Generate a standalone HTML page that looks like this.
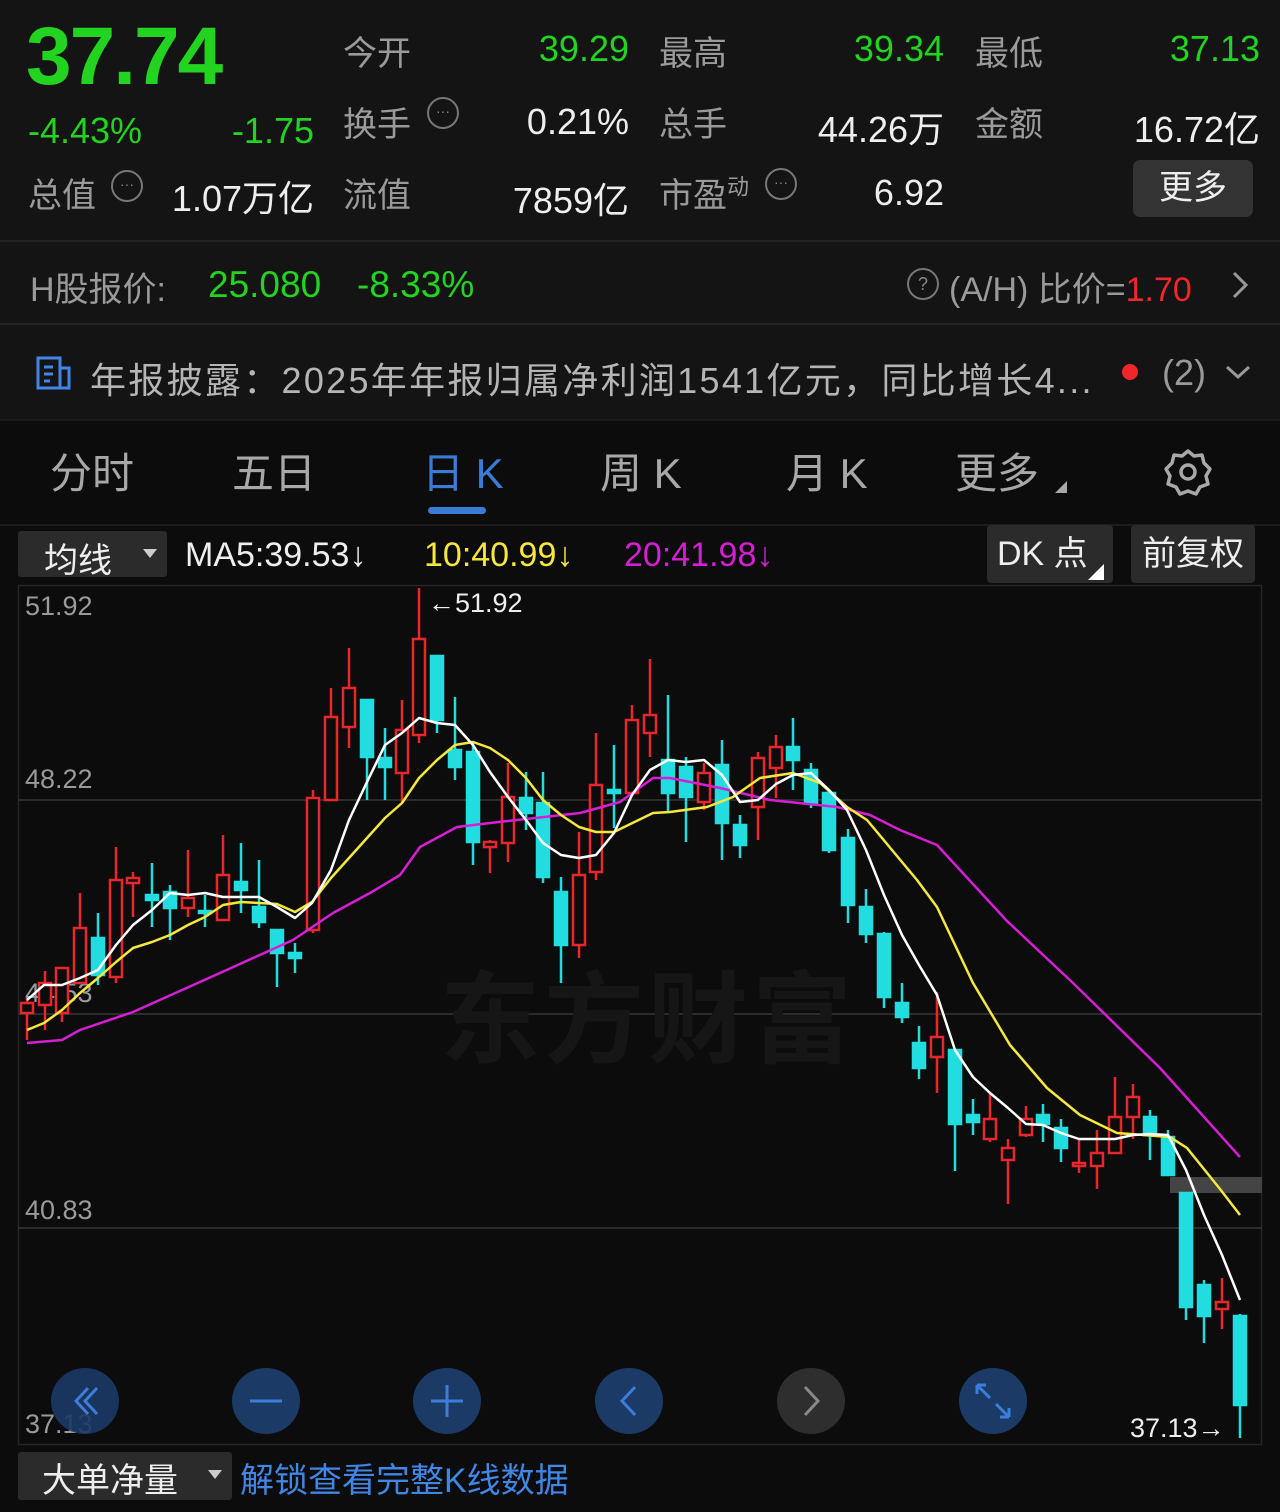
<!DOCTYPE html>
<html><head><meta charset="utf-8">
<style>
*{margin:0;padding:0;box-sizing:border-box}
body{width:1280px;height:1512px;background:#0c0c0c;font-family:"Liberation Sans","Noto Sans CJK SC",sans-serif;overflow:hidden;position:relative;color:#ddd}
.a{position:absolute;white-space:nowrap}
.g{color:#22d31f}.w{color:#eee}.l{color:#9a9a9a}
.top{position:absolute;left:0;top:0;width:1280px;height:420px;background:#141414}
.sep{position:absolute;left:0;width:1280px;height:2px;background:#222}
.dots{display:inline-block;width:32px;height:32px;border:2px solid #777;border-radius:50%;position:absolute;text-align:center;font-size:14px;line-height:24px;color:#888}
</style></head><body>
<div class="top"></div>
<div class="a g" style="left:26px;top:10px;font-size:82px;font-weight:bold;letter-spacing:-2px">37.74</div>
<div class="a g" style="left:28px;top:110px;font-size:36px">-4.43%</div>
<div class="a g" style="right:966px;top:110px;font-size:36px">-1.75</div>
<div class="a l" style="left:28px;top:168px;font-size:34px">总值</div><span class="dots" style="left:111px;top:170px">···</span>
<div class="a w" style="right:966px;top:170px;font-size:36px">1.07万亿</div>

<div class="a l" style="left:343px;top:26px;font-size:34px">今开</div>
<div class="a g" style="right:651px;top:28px;font-size:36px">39.29</div>
<div class="a l" style="left:343px;top:97px;font-size:34px">换手</div><span class="dots" style="left:427px;top:97px">···</span>
<div class="a w" style="right:651px;top:101px;font-size:36px">0.21%</div>
<div class="a l" style="left:343px;top:168px;font-size:34px">流值</div>
<div class="a w" style="right:651px;top:172px;font-size:36px">7859亿</div>

<div class="a l" style="left:659px;top:26px;font-size:34px">最高</div>
<div class="a g" style="right:336px;top:28px;font-size:36px">39.34</div>
<div class="a l" style="left:659px;top:97px;font-size:34px">总手</div>
<div class="a w" style="right:336px;top:101px;font-size:36px">44.26万</div>
<div class="a l" style="left:659px;top:168px;font-size:34px">市盈<sup style="font-size:22px">动</sup></div><span class="dots" style="left:765px;top:168px">···</span>
<div class="a w" style="right:336px;top:172px;font-size:36px">6.92</div>

<div class="a l" style="left:975px;top:26px;font-size:34px">最低</div>
<div class="a g" style="right:20px;top:28px;font-size:36px">37.13</div>
<div class="a l" style="left:975px;top:97px;font-size:34px">金额</div>
<div class="a w" style="right:20px;top:101px;font-size:36px">16.72亿</div>
<div class="a w" style="left:1133px;top:160px;width:120px;height:57px;background:#333;border-radius:7px;font-size:34px;text-align:center;line-height:57px">更多</div>

<div class="sep" style="top:240px"></div>
<div class="a l" style="left:30px;top:262px;font-size:34px">H股报价:</div>
<div class="a g" style="left:208px;top:264px;font-size:37px">25.080</div>
<div class="a g" style="left:357px;top:264px;font-size:37px">-8.33%</div>
<span class="dots" style="left:907px;top:268px;font-size:18px;line-height:28px">?</span>
<div class="a l" style="left:949px;top:262px;font-size:34px">(A/H) 比价=<span style="color:#f0262a">1.70</span></div>
<svg class="a" style="left:1230px;top:270px" width="20" height="30"><path d="M4 3 L16 15 L4 27" fill="none" stroke="#999" stroke-width="3"/></svg>
<div class="sep" style="top:323px"></div>
<svg class="a" style="left:36px;top:356px" width="36" height="34" viewBox="0 0 36 34"><rect x="2" y="2" width="22" height="30" fill="none" stroke="#3f86e6" stroke-width="3"/><rect x="24" y="12" width="9" height="20" fill="none" stroke="#3f86e6" stroke-width="3"/><line x1="8" y1="11" x2="17" y2="11" stroke="#3f86e6" stroke-width="3"/><line x1="8" y1="18" x2="17" y2="18" stroke="#3f86e6" stroke-width="3"/><line x1="8" y1="25" x2="14" y2="25" stroke="#3f86e6" stroke-width="3"/></svg>
<div class="a" style="left:90px;top:352px;font-size:36px;color:#b5b5b5;letter-spacing:2.3px">年报披露：2025年年报归属净利润1541亿元，同比增长4...</div>
<div class="a" style="left:1122px;top:364px;width:16px;height:16px;border-radius:50%;background:#f0262a"></div>
<div class="a l" style="left:1162px;top:352px;font-size:36px">(2)</div>
<svg class="a" style="left:1224px;top:364px" width="28" height="16"><path d="M3 3 L14 13 L25 3" fill="none" stroke="#999" stroke-width="3"/></svg>
<div class="sep" style="top:419px;background:#1a1a1a"></div>

<div class="a" style="left:50px;top:440px;font-size:42px;color:#a8a8a8">分时</div>
<div class="a" style="left:232px;top:440px;font-size:42px;color:#a8a8a8">五日</div>
<div class="a" style="left:422px;top:440px;font-size:42px;color:#3a7bd5">日 K</div>
<div class="a" style="left:428px;top:507px;width:58px;height:7px;border-radius:4px;background:#3a7bd5"></div>
<div class="a" style="left:600px;top:440px;font-size:42px;color:#a8a8a8">周 K</div>
<div class="a" style="left:786px;top:440px;font-size:42px;color:#a8a8a8">月 K</div>
<div class="a" style="left:955px;top:440px;font-size:42px;color:#a8a8a8">更多</div>
<div class="a" style="left:1055px;top:481px;width:0;height:0;border-left:12px solid transparent;border-bottom:12px solid #a8a8a8"></div>
<svg class="a" style="left:1163px;top:447px" width="50" height="50" viewBox="0 0 50 50"><path d="M25 4 L31 9 L39 8 L41 16 L47 22 L43 29 L45 37 L37 40 L33 47 L25 44 L17 47 L13 40 L5 37 L7 29 L3 22 L9 16 L11 8 L19 9 Z" fill="none" stroke="#a8a8a8" stroke-width="3.5" stroke-linejoin="round"/><circle cx="25" cy="25" r="7" fill="none" stroke="#a8a8a8" stroke-width="3.5"/></svg>
<div class="sep" style="top:524px;background:#1d1d1d"></div>

<div class="a" style="left:18px;top:531px;width:149px;height:46px;background:#2b2b2b;border-radius:3px"></div>
<div class="a w" style="left:44px;top:533px;font-size:34px">均线</div>
<div class="a" style="left:143px;top:549px;width:0;height:0;border-left:7px solid transparent;border-right:7px solid transparent;border-top:9px solid #ccc"></div>
<div class="a w" style="left:185px;top:536px;font-size:34px">MA5:39.53↓</div>
<div class="a" style="left:424px;top:536px;font-size:34px;color:#f5e83a">10:40.99↓</div>
<div class="a" style="left:624px;top:536px;font-size:34px;color:#d61ed4">20:41.98↓</div>
<div class="a w" style="left:987px;top:525px;width:126px;height:58px;background:#2b2b2b;border-radius:4px;font-size:34px;line-height:58px;padding-left:10px">DK 点</div>
<div class="a" style="left:1088px;top:564px;width:0;height:0;border-left:16px solid transparent;border-bottom:16px solid #fff"></div>
<div class="a w" style="left:1131px;top:525px;width:124px;height:58px;background:#2b2b2b;border-radius:4px;font-size:34px;line-height:58px;text-align:center">前复权</div>

<svg class="a" style="left:0;top:0" width="1280" height="1512">
<rect x="18.5" y="585.5" width="1243" height="859" fill="none" stroke="#262626" stroke-width="1.5"/>
<line x1="18" y1="800" x2="1262" y2="800" stroke="#2c2c2c" stroke-width="2"/>
<line x1="18" y1="1014" x2="1262" y2="1014" stroke="#2c2c2c" stroke-width="2"/>
<line x1="18" y1="1228" x2="1262" y2="1228" stroke="#2c2c2c" stroke-width="2"/>
<text x="440" y="1055" font-size="100" font-weight="bold" fill="#161616" font-family="Noto Sans CJK SC,sans-serif" letter-spacing="4">东方财富</text>
<rect x="1170" y="1177" width="92" height="16" fill="#444"/>
<g font-size="27" fill="#9a9a9a" font-family="Liberation Sans,sans-serif">
<text x="25" y="615">51.92</text><text x="25" y="788">48.22</text><text x="25" y="1002">44.53</text><text x="25" y="1219">40.83</text><text x="25" y="1433">37.13</text></g>
<text x="428" y="612" font-size="27" fill="#eee" font-family="Liberation Sans,sans-serif">←51.92</text>
<text x="1130" y="1437" font-size="27" fill="#eee" font-family="Liberation Sans,sans-serif">37.13→</text>
<g stroke="#e8262b" stroke-width="2.5" fill="#0c0c0c">
<line x1="27" y1="998" x2="27" y2="1040"/><rect x="21" y="1003" width="12" height="10"/>
<line x1="45" y1="971" x2="45" y2="1030"/><rect x="39" y="983" width="12" height="22"/>
<line x1="62" y1="968" x2="62" y2="1022"/><rect x="56" y="968" width="12" height="45"/>
<line x1="80" y1="893" x2="80" y2="983"/><rect x="74" y="928" width="12" height="55"/>
<line x1="116" y1="847" x2="116" y2="983"/><rect x="110" y="880" width="12" height="97"/>
<line x1="133" y1="872" x2="133" y2="917"/><rect x="127" y="878" width="12" height="5"/>
<line x1="188" y1="850" x2="188" y2="917"/><rect x="182" y="898" width="12" height="10"/>
<line x1="223" y1="835" x2="223" y2="920"/><rect x="217" y="875" width="12" height="45"/>
<line x1="313" y1="790" x2="313" y2="933"/><rect x="307" y="798" width="12" height="132"/>
<line x1="331" y1="688" x2="331" y2="800"/><rect x="325" y="717" width="12" height="83"/>
<line x1="349" y1="648" x2="349" y2="748"/><rect x="343" y="688" width="12" height="39"/>
<line x1="402" y1="700" x2="402" y2="802"/><rect x="396" y="730" width="12" height="43"/>
<line x1="419" y1="588" x2="419" y2="743"/><rect x="413" y="639" width="12" height="96"/>
<line x1="490" y1="840" x2="490" y2="873"/><rect x="484" y="842" width="12" height="5"/>
<line x1="508" y1="763" x2="508" y2="862"/><rect x="502" y="797" width="12" height="46"/>
<line x1="579" y1="832" x2="579" y2="958"/><rect x="573" y="875" width="12" height="70"/>
<line x1="596" y1="733" x2="596" y2="880"/><rect x="590" y="785" width="12" height="87"/>
<line x1="632" y1="705" x2="632" y2="793"/><rect x="626" y="720" width="12" height="73"/>
<line x1="650" y1="659" x2="650" y2="757"/><rect x="644" y="715" width="12" height="18"/>
<line x1="704" y1="763" x2="704" y2="810"/><rect x="698" y="773" width="12" height="29"/>
<line x1="758" y1="752" x2="758" y2="840"/><rect x="752" y="758" width="12" height="49"/>
<line x1="776" y1="735" x2="776" y2="798"/><rect x="770" y="747" width="12" height="21"/>
<line x1="937" y1="992" x2="937" y2="1093"/><rect x="931" y="1037" width="12" height="20"/>
<line x1="990" y1="1093" x2="990" y2="1142"/><rect x="984" y="1119" width="12" height="20"/>
<line x1="1008" y1="1139" x2="1008" y2="1204"/><rect x="1002" y="1148" width="12" height="12"/>
<line x1="1026" y1="1106" x2="1026" y2="1137"/><rect x="1020" y="1119" width="12" height="16"/>
<line x1="1079" y1="1139" x2="1079" y2="1173"/><rect x="1073" y="1163" width="12" height="3"/>
<line x1="1097" y1="1130" x2="1097" y2="1189"/><rect x="1091" y="1153" width="12" height="13"/>
<line x1="1115" y1="1077" x2="1115" y2="1153"/><rect x="1109" y="1117" width="12" height="36"/>
<line x1="1133" y1="1084" x2="1133" y2="1139"/><rect x="1127" y="1097" width="12" height="20"/>
<line x1="1222" y1="1278" x2="1222" y2="1329"/><rect x="1216" y="1302" width="12" height="7"/>
</g>
<g stroke="#22dde0" stroke-width="2.5" fill="#22dde0">
<line x1="98" y1="913" x2="98" y2="985"/><rect x="92" y="938" width="12" height="37"/>
<line x1="152" y1="863" x2="152" y2="927"/><rect x="146" y="895" width="12" height="5"/>
<line x1="170" y1="885" x2="170" y2="940"/><rect x="164" y="892" width="12" height="16"/>
<line x1="205" y1="895" x2="205" y2="927"/><rect x="199" y="911" width="12" height="2"/>
<line x1="241" y1="843" x2="241" y2="913"/><rect x="235" y="882" width="12" height="8"/>
<line x1="259" y1="860" x2="259" y2="928"/><rect x="253" y="907" width="12" height="15"/>
<line x1="277" y1="930" x2="277" y2="987"/><rect x="271" y="930" width="12" height="23"/>
<line x1="295" y1="943" x2="295" y2="973"/><rect x="289" y="953" width="12" height="5"/>
<line x1="367" y1="700" x2="367" y2="800"/><rect x="361" y="700" width="12" height="57"/>
<line x1="385" y1="728" x2="385" y2="800"/><rect x="379" y="758" width="12" height="9"/>
<line x1="437" y1="656" x2="437" y2="733"/><rect x="431" y="656" width="12" height="64"/>
<line x1="455" y1="697" x2="455" y2="780"/><rect x="449" y="750" width="12" height="17"/>
<line x1="473" y1="743" x2="473" y2="865"/><rect x="467" y="752" width="12" height="90"/>
<line x1="526" y1="772" x2="526" y2="830"/><rect x="520" y="798" width="12" height="15"/>
<line x1="543" y1="772" x2="543" y2="883"/><rect x="537" y="803" width="12" height="74"/>
<line x1="561" y1="877" x2="561" y2="983"/><rect x="555" y="892" width="12" height="53"/>
<line x1="614" y1="745" x2="614" y2="828"/><rect x="608" y="790" width="12" height="3"/>
<line x1="668" y1="695" x2="668" y2="812"/><rect x="662" y="760" width="12" height="33"/>
<line x1="686" y1="757" x2="686" y2="842"/><rect x="680" y="767" width="12" height="30"/>
<line x1="722" y1="740" x2="722" y2="860"/><rect x="716" y="765" width="12" height="58"/>
<line x1="740" y1="815" x2="740" y2="858"/><rect x="734" y="825" width="12" height="20"/>
<line x1="793" y1="718" x2="793" y2="790"/><rect x="787" y="747" width="12" height="13"/>
<line x1="811" y1="763" x2="811" y2="808"/><rect x="805" y="770" width="12" height="33"/>
<line x1="829" y1="790" x2="829" y2="853"/><rect x="823" y="793" width="12" height="57"/>
<line x1="848" y1="829" x2="848" y2="923"/><rect x="842" y="838" width="12" height="67"/>
<line x1="866" y1="889" x2="866" y2="943"/><rect x="860" y="907" width="12" height="27"/>
<line x1="884" y1="932" x2="884" y2="1008"/><rect x="878" y="934" width="12" height="63"/>
<line x1="902" y1="983" x2="902" y2="1023"/><rect x="896" y="1003" width="12" height="14"/>
<line x1="919" y1="1026" x2="919" y2="1079"/><rect x="913" y="1043" width="12" height="25"/>
<line x1="955" y1="1050" x2="955" y2="1171"/><rect x="949" y="1050" width="12" height="74"/>
<line x1="973" y1="1099" x2="973" y2="1135"/><rect x="967" y="1115" width="12" height="7"/>
<line x1="1043" y1="1104" x2="1043" y2="1142"/><rect x="1037" y="1115" width="12" height="9"/>
<line x1="1061" y1="1119" x2="1061" y2="1162"/><rect x="1055" y="1128" width="12" height="20"/>
<line x1="1150" y1="1110" x2="1150" y2="1160"/><rect x="1144" y="1117" width="12" height="18"/>
<line x1="1168" y1="1130" x2="1168" y2="1175"/><rect x="1162" y="1137" width="12" height="38"/>
<line x1="1186" y1="1193" x2="1186" y2="1320"/><rect x="1180" y="1193" width="12" height="114"/>
<line x1="1204" y1="1280" x2="1204" y2="1343"/><rect x="1198" y="1285" width="12" height="31"/>
<line x1="1240" y1="1314" x2="1240" y2="1438"/><rect x="1234" y="1316" width="12" height="89"/>
</g>
<g fill="none" stroke-width="2.5" stroke-linejoin="round">
<polyline stroke="#d61ed4" points="27,1043 62,1040 80,1030 133,1012 220,973 293,940 333,913 370,893 400,875 420,847 457,827 490,823 580,813 620,802 653,778 670,778 720,788 770,800 837,807 870,815 900,830 937,845 1007,921 1073,983 1160,1068 1240,1157"/>
<polyline stroke="#f5e83a" points="27,1030 44,1023 62,1010 80,993 98,978 116,962 133,948 152,942 170,935 188,925 205,917 223,905 241,902 259,903 277,904 295,912 312,902 331,878 349,858 367,838 385,818 402,803 419,778 437,760 455,745 473,742 490,748 508,760 526,778 543,800 561,815 579,827 596,832 614,832 653,813 670,812 707,807 733,797 760,778 793,773 820,783 847,807 867,820 917,880 937,907 973,983 1010,1045 1047,1088 1080,1115 1117,1133 1170,1137 1187,1148 1220,1189 1240,1215"/>
<polyline stroke="#ffffff" points="27,1000 44,985 62,985 80,978 98,970 116,945 133,925 152,910 170,893 188,895 205,893 223,897 241,897 259,897 277,907 295,918 312,903 331,870 349,820 367,782 385,745 402,733 419,718 437,723 455,725 473,745 490,772 508,797 526,820 543,843 561,855 579,858 596,855 614,833 632,795 650,770 668,760 686,762 704,760 722,775 740,802 758,800 776,784 793,775 811,773 829,790 847,810 866,850 884,895 902,935 919,965 937,995 955,1050 973,1077 990,1093 1008,1108 1026,1124 1043,1125 1061,1133 1079,1139 1097,1139 1115,1139 1133,1135 1150,1134 1168,1135 1186,1170 1204,1215 1222,1255 1240,1300"/>
</g>
<g>
<ellipse cx="85" cy="1401" rx="34" ry="33" fill="#1b3a66" opacity="0.9"/>
<path d="M88 1388 L76 1401 L88 1414 M97 1388 L85 1401 L97 1414" fill="none" stroke="#3b7dd8" stroke-width="3"/>
<ellipse cx="266" cy="1401" rx="34" ry="33" fill="#1b3a66"/>
<line x1="250" y1="1401" x2="282" y2="1401" stroke="#3b7dd8" stroke-width="3"/>
<ellipse cx="447" cy="1401" rx="34" ry="33" fill="#1b3a66"/>
<path d="M431 1401 H463 M447 1385 V1417" stroke="#3b7dd8" stroke-width="3"/>
<ellipse cx="629" cy="1401" rx="34" ry="33" fill="#1b3a66"/>
<path d="M635 1387 L622 1401 L635 1415" fill="none" stroke="#3b7dd8" stroke-width="3"/>
<ellipse cx="811" cy="1401" rx="34" ry="33" fill="#2e2e2e"/>
<path d="M805 1387 L818 1401 L805 1415" fill="none" stroke="#888" stroke-width="3"/>
<ellipse cx="993" cy="1401" rx="34" ry="33" fill="#1b3a66"/>
<path d="M977 1385 L990 1398 M977 1385 H986 M977 1385 V1394 M1009 1417 L996 1404 M1009 1417 H1000 M1009 1417 V1408" fill="none" stroke="#3b7dd8" stroke-width="3"/>
</g>
</svg>

<div class="a" style="left:18px;top:1452px;width:214px;height:48px;background:#2b2b2b;border-radius:3px"></div>
<div class="a w" style="left:42px;top:1453px;font-size:34px">大单净量</div>
<div class="a" style="left:208px;top:1470px;width:0;height:0;border-left:7px solid transparent;border-right:7px solid transparent;border-top:9px solid #ccc"></div>
<div class="a" style="left:240px;top:1453px;font-size:34px;color:#3f86e6">解锁查看完整K线数据</div>
</body></html>
